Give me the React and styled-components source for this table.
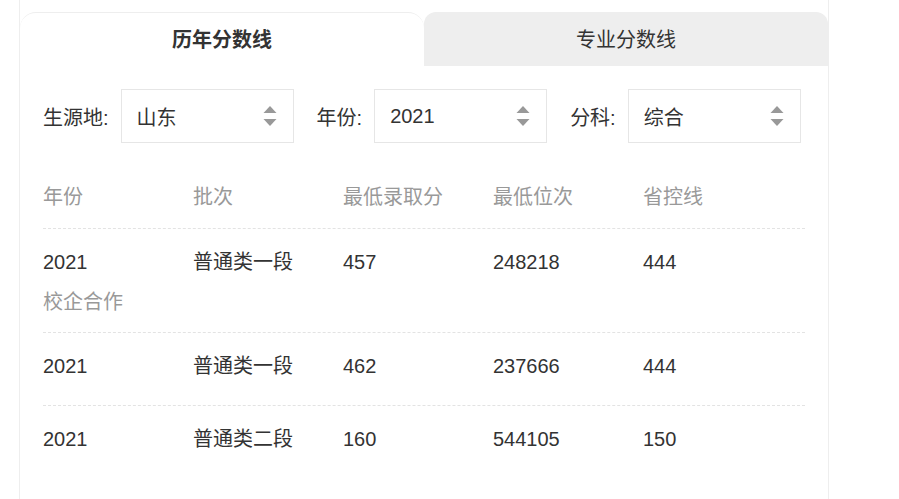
// Score lines panel: tabs, filters and table of yearly scores
import React, { useState } from "react";
import styled, { createGlobalStyle } from "styled-components";

const GlobalStyle = createGlobalStyle`
  body {
    margin: 0;
    background: #fff;
    font-family: "Liberation Sans", "Noto Sans CJK SC", sans-serif;
    color: #333;
  }
`;

const rows = [
  { year: "2021", batch: "普通类一段", score: "457", rank: "248218", line: "444", tag: "校企合作" },
  { year: "2021", batch: "普通类一段", score: "462", rank: "237666", line: "444" },
  { year: "2021", batch: "普通类二段", score: "160", rank: "544105", line: "150" },
];

const filters = [
  { label: "生源地:", value: "山东" },
  { label: "年份:", value: "2021" },
  { label: "分科:", value: "综合" },
];

const Arrows = () => (
  <svg width="14" height="22" viewBox="0 0 14 22">
    <path d="M7 1 L13.5 8 L0.5 8 Z" fill="#999" />
    <path d="M7 21 L13.5 14 L0.5 14 Z" fill="#999" />
  </svg>
);

const App = () => {
  const [tab, setTab] = useState(0);

  return (
    <>
      <GlobalStyle />
      <Panel>
        <Tabs>
          <Tab $active={tab === 0} onClick={() => setTab(0)}>
            历年分数线
          </Tab>
          <Tab $active={tab === 1} onClick={() => setTab(1)}>
            专业分数线
          </Tab>
        </Tabs>
        <Body>
          <FilterRow>
            {filters.map((f) => (
              <Filter key={f.label}>
                <Label>{f.label}</Label>
                <Select>
                  <span>{f.value}</span>
                  <Arrows />
                </Select>
              </Filter>
            ))}
          </FilterRow>
          <HeadRow>
            <span>年份</span>
            <span>批次</span>
            <span>最低录取分</span>
            <span>最低位次</span>
            <span>省控线</span>
          </HeadRow>
          {rows.map((r, i) => (
            <Row key={i} $hasTag={!!r.tag}>
              <Cells>
                <span>{r.year}</span>
                <span>{r.batch}</span>
                <span>{r.score}</span>
                <span>{r.rank}</span>
                <span>{r.line}</span>
              </Cells>
              {r.tag && <Tag>{r.tag}</Tag>}
            </Row>
          ))}
        </Body>
      </Panel>
    </>
  );
};

const Panel = styled.div`
  margin-left: 19px;
  width: 808px;
  min-height: 499px;
  padding-top: 12px;
  border-left: 1px solid #eee;
  border-right: 1px solid #eee;
`;

const Tabs = styled.div`
  display: grid;
  grid-template-columns: 1fr 1fr;
  height: 54px;
  background: #fff;
`;

const Tab = styled.div`
  display: flex;
  align-items: center;
  justify-content: center;
  font-size: 20px;
  cursor: pointer;
  color: #333;
  font-weight: ${(p) => (p.$active ? "bold" : "normal")};
  background: ${(p) => (p.$active ? "#fff" : "#eee")};
  border-radius: ${(p) => (p.$active ? "16px 16px 0 0" : "12px 12px 0 0")};
  border-top: ${(p) => (p.$active ? "1px solid #eee" : "none")};
  box-sizing: border-box;
  padding-bottom: 2px;
`;

const Body = styled.div`
  padding: 0 23px 30px;
`;

const FilterRow = styled.div`
  display: flex;
  align-items: center;
  gap: 23px;
  padding-top: 23px;
`;

const Filter = styled.div`
  display: flex;
  align-items: center;
  gap: 12px;
`;

const Label = styled.span`
  font-size: 20px;
  color: #333;
`;

const Select = styled.div`
  display: flex;
  align-items: center;
  justify-content: space-between;
  width: 173px;
  height: 54px;
  box-sizing: border-box;
  padding: 0 16px 0 15px;
  border: 1px solid #e6e6e6;
  font-size: 20px;
  color: #333;
`;

const Cells = styled.div`
  display: grid;
  grid-template-columns: repeat(5, 150px);
  line-height: 26px;
  font-size: 20px;
`;

const HeadRow = styled(Cells)`
  color: #999;
  margin-top: 41px;
  padding-bottom: 18px;
  border-bottom: 1px dashed #e3e3e3;
`;

const Row = styled.div`
  padding: 20px 0 ${(p) => (p.$hasTag ? "17px" : "26px")};
  border-bottom: 1px dashed #e3e3e3;
  color: #333;

  &:last-child {
    border-bottom: none;
  }
`;

const Tag = styled.div`
  margin-top: 14px;
  font-size: 20px;
  line-height: 26px;
  color: #999;
`;

export default App;
